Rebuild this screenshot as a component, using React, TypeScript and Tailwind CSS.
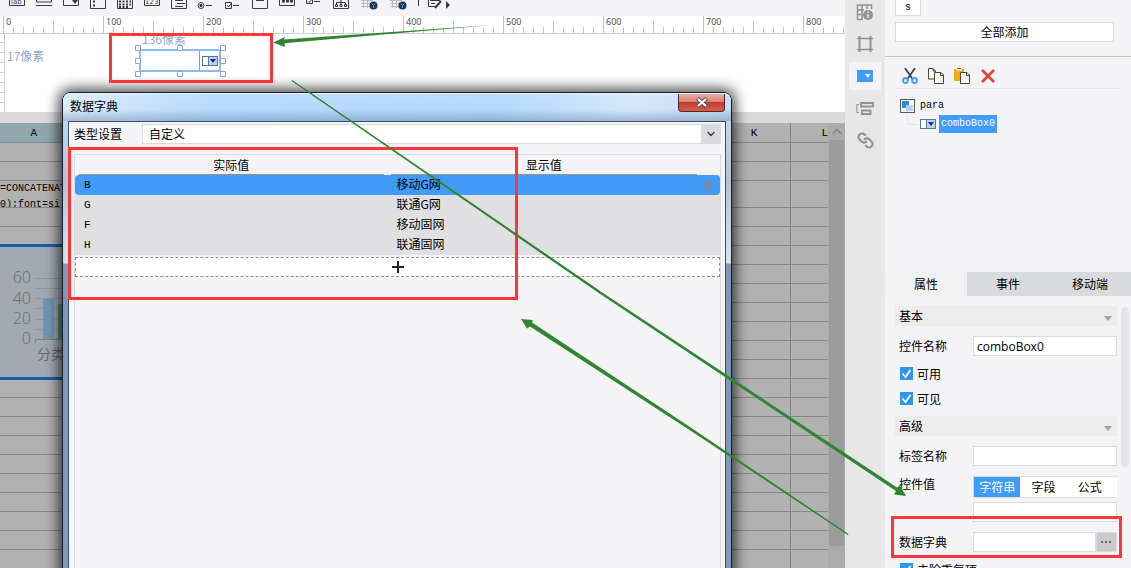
import { useState, type ReactNode } from 'react';
import { ChevronDown, ChevronUp } from 'lucide-react';

const ROWS = [
  { value: 'B', label: '移动G网' },
  { value: 'G', label: '联通G网' },
  { value: 'F', label: '移动固网' },
  { value: 'H', label: '联通固网' },
];

const RULER_MARKS = [0, 100, 200, 300, 400, 500, 600, 700, 800];

// the formula row is taller than the rest
const SHEET_ROWS = [
  { height: 'h-[19px]', text: '' },
  { height: 'h-[19px]', text: '' },
  { height: 'h-[27px]', text: 'formula' },
  ...Array.from({ length: 60 }, () => ({ height: 'h-[19px]', text: '' })),
];

function ComboIcon({ className }: { className?: string }) {
  return (
    <svg className={className} width="16" height="10" viewBox="0 0 16 10" aria-hidden="true">
      <rect x="0.5" y="0.5" width="15" height="9" fill="#fff" stroke="#5577a8" />
      <path d="M6.5 1H15v8H6.5z" fill="#b9d3f3" />
      <path d="M6.5 1v8" stroke="#5577a8" />
      <path d="M8 3h6l-3 4z" fill="#1b2f7c" />
    </svg>
  );
}

function Toolbar() {
  return (
    <div className="h-4 overflow-hidden bg-[#f4f4f7]">
      <svg width="460" height="16" fill="none" stroke="#3a3a3e" aria-hidden="true">
        <path d="M9.500 -2v7.500h15v-7.500M36.500 -2v4h15v-4M36 5.500h16M63.500 -2v7.500h15v-7.500M90.500 -2v10.500h15v-10.500M117.500 -2v10.500h15v-10.500M144.500 -2v7.500h15v-7.500M171.500 -2v10.500h15v-10.500" />
        <text x="11" y="4" fontSize="7" fill="#3a3a3e" stroke="none" className="font-['DejaVu_Sans']">lab</text>
        <text x="145" y="4" fontSize="7" fill="#3a3a3e" stroke="none" className="font-['DejaVu_Sans']">123</text>
        <path d="M72 0h6l-3 4z" fill="#3a3a3e" stroke="none" />
        <path d="M93 1.500h2M93 5.500h2" strokeWidth="2" />
        <path d="M119 1.500h12M119 4.500h12M119 7h9" strokeDasharray="2 1.500" strokeWidth="2" />
        <path d="M175 .5h8M177 3.500h8M175 6.500h8" />
        <circle cx="201" cy="5.500" r="3" />
        <circle cx="201" cy="5.500" r="1.200" fill="#3a3a3e" />
        <path d="M206 5.500h6M233 5.500h6" />
        <path d="M225.500 2.500h6v6h-6zM227 5l1.500 2 3-4" />
        <path d="M252.500 -2v10.500h15v-10.500M256 .5h8" />
        <path d="M279.500 -2v7.500h15v-7.500" />
        <path d="M282 1h11" strokeWidth="3" strokeDasharray="3 1" />
        <path d="M306.500 -2v5.500h6v-5.500M308 1.500l1 1 3-3M314 1.500h6" />
        <path d="M333.500 -2v10.500h15v-10.500M341 0v2.500M336.500 5v-2.500h9V5M341 2v3" />
        <path d="M335.500 4.500h2v2h-2zM340 4.500h2v2h-2zM344.500 4.500h2v2h-2z" />
        <g stroke="#b5bac0">
          <path d="M361 .5h12M361 3.500h11M361 6.500h9M363.500 0v8M367.500 0v8M390 .5h12M390 3.500h11M390 6.500h9M392.500 0v8M396.500 0v8" />
        </g>
        <circle cx="373.500" cy="5.500" r="4" fill="#1e3450" stroke="none" />
        <path d="M371.500 3.500l2 2 2-2M373.500 5.500v2.500" stroke="#4aa3e0" />
        <circle cx="402.500" cy="5.500" r="4" fill="#1e3450" stroke="none" />
        <path d="M400.500 3.500l2 2 2-2M402.500 5.500v2.500" stroke="#4aa3e0" />
        <path d="M418.500 0v6" />
        <path d="M428.500 -2v8.500h7M430 .5h10M431 3.500h4M441 -2v2" />
        <path d="M435 8l6-7" strokeWidth="2" />
        <path d="M446 1v8l4-4z" fill="#3a3a3e" stroke="none" />
      </svg>
    </div>
  );
}

function Ruler() {
  return (
    <div className="flex h-[18px] overflow-hidden border-b border-[#cfcfd3] bg-white pl-[3px]">
      {RULER_MARKS.map((mark) => (
        <div key={mark} className="relative w-[100px] shrink-0">
          <svg width="100" height="17" stroke="#c4c4c8" aria-hidden="true">
            <path d="M.5 0v17M50.500 5v12" />
            <path d="M10.500 11v6M20.500 11v6M30.500 11v6M40.500 11v6M60.500 11v6M70.500 11v6M80.500 11v6M90.500 11v6" />
          </svg>
          <span className="absolute left-[3px] top-0 font-['Open_Sans',sans-serif] text-[9px] leading-[12px] text-[#444]">
            {mark}
          </span>
        </div>
      ))}
    </div>
  );
}

function ParamCanvas() {
  return (
    <div className="relative h-[78px] overflow-hidden bg-white">
      <svg className="absolute left-0 top-0" width="5" height="78" stroke="#cfcfd3" aria-hidden="true">
        <path d="M4.500 0v78M0 8.500h4M0 18.500h4M0 28.500h4M0 38.500h4M0 48.500h4M0 58.500h4M0 68.500h4" />
      </svg>
      <span className="absolute left-[7px] top-[14px] text-xs leading-4 text-[#8da9c4]">17像素</span>
      <span className="absolute left-[142px] top-[-3px] text-xs leading-4 text-[#8da9c4]">136像素</span>
      <div className="absolute left-[139px] top-[15px] flex h-[23px] w-[82px] items-center justify-end border-2 border-[#87bdf7] bg-white">
        <span className="mr-[2px] h-[19px] w-px bg-[#999]" />
        <ComboIcon className="mr-px" />
      </div>
      <svg className="absolute left-[135px] top-[11px]" width="92" height="32" fill="#fff" stroke="#86a6c2" aria-hidden="true">
        <path d="M.5 .5h5v5h-5zM42.500 .5h5v5h-5zM85.500 .5h5v5h-5zM.5 13.500h5v5h-5zM85.500 13.500h5v5h-5zM.5 26.500h5v5h-5zM42.500 26.500h5v5h-5zM85.500 26.500h5v5h-5z" />
      </svg>
    </div>
  );
}

function ChartPreview() {
  return (
    <div className="absolute left-0 top-[121px] h-[136px] w-[300px] border-y-[3px] border-[#1f5bab] bg-[#a3a8b1]">
      <svg width="300" height="130" aria-hidden="true">
        <path d="M35 31.500h265M35 41.500h265M35 51.500h265M35 61.500h265M35 72.500h265M35 82.500h265" stroke="#90949b" />
        <path d="M35.500 92.500H300M35.500 92v4" stroke="#7c8086" fill="none" />
        <rect x="43" y="52" width="11" height="40" fill="#6f97b5" />
        <rect x="58" y="57" width="11" height="35" fill="#5c8d74" />
        <g className="font-['Open_Sans',sans-serif] font-light" fontSize="16" fill="#666a70" textAnchor="end">
          <text x="31" y="36">60</text>
          <text x="31" y="57">40</text>
          <text x="31" y="77">20</text>
          <text x="31" y="97">0</text>
        </g>
        <text x="37" y="112" fontSize="14" fill="#666a70">分类</text>
      </svg>
    </div>
  );
}

function Spreadsheet() {
  return (
    <div className="flex min-h-0 flex-1 overflow-hidden bg-[#b2b2b2]">
      <div className="relative min-w-0 flex-1 overflow-hidden">
        <table className="w-full table-fixed border-collapse font-['Liberation_Mono',monospace] text-[10px] text-black">
          <colgroup>
            <col className="w-[68px]" />
            <col />
            <col className="w-[72px]" />
            <col className="w-[38px]" />
          </colgroup>
          <thead>
            <tr className="h-[19px] border-b border-[#868686] text-[11px] leading-4">
              <th className="border-r border-[#868686] bg-[#90a6ad] p-0 pt-[2px] font-normal">A</th>
              <th className="border-r border-[#868686]" />
              <th className="border-r border-[#868686] p-0 pt-[2px] font-normal">K</th>
              <th className="p-0 pt-[2px] text-right font-normal">L</th>
            </tr>
          </thead>
          <tbody>
            {SHEET_ROWS.map((row, i) => (
              <tr key={i} className={`${row.height} border-b border-[#868686]`}>
                <td className="border-r border-[#868686] p-0">
                  {row.text && (
                    <div className="h-[26px] overflow-hidden whitespace-nowrap leading-4">
                      =CONCATENATE(
                      <br />
                      0);font=si
                    </div>
                  )}
                </td>
                <td className="border-r border-[#868686]" />
                <td className="border-r border-[#868686]" />
                <td />
              </tr>
            ))}
          </tbody>
        </table>
        <ChartPreview />
      </div>
      <div className="flex w-[17px] flex-col items-center bg-[#ababab]">
        <ChevronUp className="h-[17px] w-4 text-[#555]" strokeWidth={1.5} />
        <div className="mb-[22px] w-[15px] flex-1 bg-[#9c9c9c]" />
      </div>
    </div>
  );
}

function DictionaryDialog() {
  const [selected, setSelected] = useState('B');

  return (
    <section
      aria-label="数据字典"
      className="absolute -bottom-2 left-[62px] top-[92px] flex w-[670px] flex-col rounded-t-lg border border-[#15202c] bg-[linear-gradient(180deg,#c9def4_0px,#b4c3d6_90px,#d5e3f2_170px,#7b98b8_171px,#7f9cbb_100%)] px-[5px] shadow-[0_0_14px_3px_rgba(0,0,0,0.75)]"
    >
      {/* Title bar */}
      <header className="-mx-[5px] flex h-7 justify-between rounded-t-lg border-t border-white/80 bg-[linear-gradient(180deg,rgba(255,255,255,0.1),rgba(255,255,255,0)_55%,rgba(70,105,145,0.35)),linear-gradient(90deg,#dcebfa,#b7dafd_22%,#b3d8fd_65%,#d3e7fb_85%,#c6dcf2)] pl-[7px] pr-[6px]">
        <h2 className="pt-[4px] text-xs leading-4 text-black">数据字典</h2>
        <button
          type="button"
          aria-label="关闭"
          className="flex h-[18px] w-[47px] items-center justify-center rounded-b border border-t-0 border-[#59232a] bg-[linear-gradient(180deg,#e6b0aa,#d98076_45%,#c33c2c_50%,#d3614c)]"
        >
          <svg width="12" height="11" viewBox="0 0 12 11" aria-hidden="true">
            <path d="M1.500 1.500l9 8M10.500 1.500l-9 8" stroke="#4a5060" strokeWidth="4" />
            <path d="M2 2l8 7M10 2l-8 7" stroke="#fff" strokeWidth="2.200" />
          </svg>
        </button>
      </header>

      <div className="flex flex-1 flex-col border border-b-0 border-[#3e4f63] bg-[#f4f4f7] pl-[5px] pr-1 pt-[2px]">
        {/* Type */}
        <div className="flex h-5 items-center">
          <label htmlFor="dict-type" className="w-[68px] text-xs text-black">
            类型设置
          </label>
          <div className="relative h-5 flex-1">
            <select
              id="dict-type"
              className="block h-5 w-full appearance-none border border-[#d9dadd] bg-white pl-[6px] text-xs leading-[18px] text-black outline-none"
            >
              <option>自定义</option>
            </select>
            <span className="pointer-events-none absolute inset-y-0 right-0 flex w-5 items-center justify-center bg-[#d9dadd]">
              <ChevronDown className="h-3 w-3 text-[#333]" strokeWidth={2.5} />
            </span>
          </div>
        </div>

        {/* Values */}
        <div className="mt-[10px] flex-1 border border-b-0 border-[#d9dadd]">
          <table className="w-full table-fixed border-separate border-spacing-0 text-xs text-black">
            <colgroup>
              <col />
              <col />
              <col className="w-[20px]" />
            </colgroup>
            <thead>
              <tr className="h-5">
                <th className="p-0 px-1 font-normal">
                  <div className="h-5 border-b border-[#999090] leading-5">实际值</div>
                </th>
                <th className="p-0 px-[3px] font-normal">
                  <div className="h-5 border-b border-[#999090] leading-5">显示值</div>
                </th>
                <th className="p-0" />
              </tr>
            </thead>
            <tbody className="bg-[#e0e0e2]">
              {ROWS.map((row) => {
                const active = row.value === selected;
                return (
                  <tr key={row.value} className="h-5" onClick={() => setSelected(row.value)}>
                    <td
                      className={`p-0 pl-[9px] font-['Liberation_Mono',monospace] text-[11px] leading-4 ${active ? 'rounded-l bg-[#419bf9]' : ''}`}
                    >
                      {row.value}
                    </td>
                    <td className={`p-0 pb-[2px] pl-[9px] leading-[18px] ${active ? 'bg-[#419bf9]' : ''}`}>{row.label}</td>
                    <td className={`p-0 ${active ? 'rounded-r bg-[#419bf9]' : ''}`}>
                      {active && (
                        <button type="button" aria-label="删除" className="flex h-5 w-[14px] items-center justify-center">
                          <svg width="9" height="9" viewBox="0 0 9 9" aria-hidden="true">
                            <path d="M1 1l7 7M8 1l-7 7" stroke="#7d8791" strokeWidth="2.500" />
                          </svg>
                        </button>
                      )}
                    </td>
                  </tr>
                );
              })}
            </tbody>
          </table>
          <button
            type="button"
            aria-label="添加"
            className="mt-[2px] flex h-5 w-full items-center justify-center border border-dashed border-[#8e8e90] bg-white"
          >
            <svg width="12" height="12" stroke="#222" strokeWidth="2" aria-hidden="true">
              <path d="M6 0v12M0 6h12" />
            </svg>
          </button>
        </div>
      </div>
    </section>
  );
}

function SideButton({ label, active, children }: { label: string; active?: boolean; children: ReactNode }) {
  return (
    <button
      type="button"
      aria-label={label}
      className={`flex h-7 w-8 items-center justify-center text-[#919193] ${active ? 'bg-[#f4f4f7]' : ''}`}
    >
      {children}
    </button>
  );
}

function SideStrip() {
  return (
    <nav className="flex w-10 shrink-0 flex-col items-center gap-1 bg-[#e7e7e7]">
      <div className="-mt-[2px]">
        <SideButton label="单元格属性">
          <svg width="18" height="17" viewBox="0 0 18 17" fill="none" stroke="currentColor" strokeWidth="1.500">
            <path d="M7 15.500H1.500V1h14v4M1.500 6H8M1.500 10.500H6M6 1v14M11 1v4" />
            <circle cx="12" cy="11" r="5" fill="currentColor" stroke="none" />
            <path d="M12 10v4M12 7.500v1.500" stroke="#e7e7e7" />
          </svg>
        </SideButton>
      </div>
      <SideButton label="悬浮元素">
        <svg width="16" height="16" viewBox="0 0 16 16" fill="none" stroke="currentColor" strokeWidth="2">
          <path d="M2.500 0v16M13.500 0v16" />
          <path d="M0 2.500h16M0 13.500h16" strokeWidth="1.500" />
        </svg>
      </SideButton>
      <SideButton label="控件设置" active>
        <svg width="16" height="12" viewBox="0 0 16 12">
          <path d="M0 0h16v12H0z" fill="#419bf9" />
          <path d="M8 4h5.500l-2.700 4z" fill="#fff" />
        </svg>
      </SideButton>
      <SideButton label="条件属性">
        <svg width="18" height="13" viewBox="0 0 18 13" fill="none" stroke="currentColor" strokeWidth="1.800">
          <path d="M3 2.500H.8v8H3" strokeWidth="1" />
          <path d="M5 1h12v3.500H5zM6 8.500h8.500V12H6z" />
        </svg>
      </SideButton>
      <SideButton label="超级链接">
        <svg width="17" height="17" viewBox="0 0 24 24" fill="none" stroke="currentColor" strokeWidth="3">
          <g transform="matrix(-1 0 0 1 24 0)">
            <path d="M10 13a5 5 0 0 0 7.540.540l3-3a5 5 0 0 0-7.070-7.070l-1.720 1.710" />
            <path d="M14 11a5 5 0 0 0-7.540-.540l-3 3a5 5 0 0 0 7.070 7.070l1.710-1.710" />
          </g>
        </svg>
      </SideButton>
    </nav>
  );
}

function WidgetTree() {
  return (
    <div className="px-[10px]">
      <div className="flex h-8 items-center gap-[10px] border-b border-[#e4e4e6] pl-[7px] pt-[6px]">
        <button type="button" aria-label="剪切">
          <svg width="16" height="16" viewBox="0 0 16 16" fill="none">
            <path d="M3 0l7.500 11M13 0L5.500 11" stroke="#3f4650" strokeWidth="1.800" />
            <circle cx="3.500" cy="12.500" r="2.500" stroke="#419bf9" strokeWidth="1.800" />
            <circle cx="12.500" cy="12.500" r="2.500" stroke="#419bf9" strokeWidth="1.800" />
          </svg>
        </button>
        <button type="button" aria-label="复制">
          <svg width="16" height="16" viewBox="0 0 16 16" fill="#fff5e0" stroke="#3f4650">
            <path d="M.5 .5H5L7.500 3v8h-7zM5 .5V3h2.500" />
            <path d="M6.500 4.500H13L15.500 7v8.500h-9zM12.500 4.500v3h3" />
          </svg>
        </button>
        <button type="button" aria-label="粘贴">
          <svg width="16" height="16" viewBox="0 0 16 16">
            <path d="M0 1h10v12H0z" fill="#f2aa13" />
            <path d="M2.500 0h5v2.500h-5z" fill="#fff" />
            <path d="M3 .5h4" stroke="#b3562a" />
            <path d="M6.500 4.500H13L15.500 7v8.500h-9zM12.500 4.500v3h3" fill="#fff5e0" stroke="#3f4650" />
          </svg>
        </button>
        <button type="button" aria-label="删除控件" className="pl-px">
          <svg width="14" height="14" viewBox="0 0 14 14">
            <path d="M1 1l12 12M13 1L1 13" stroke="#e8413b" strokeWidth="2.800" />
          </svg>
        </button>
      </div>
      <ul className="pl-[5px] pt-2 font-['Liberation_Mono',monospace] text-[10px] leading-[18px] text-black">
        <li className="flex items-center gap-[5px]">
          <svg width="15" height="14" viewBox="0 0 15 14">
            <rect x=".5" y=".5" width="14" height="13" fill="#fff" stroke="#55595f" />
            <path d="M2 2h7v7H2z" fill="#2f8dcb" />
            <path d="M6 6h7v6H6z" fill="#b7cdf5" />
          </svg>
          para
        </li>
        <li className="flex items-center">
          <svg width="20" height="18" fill="none" stroke="#e4e4e6">
            <path d="M7.500 0v9.500H17" />
          </svg>
          <ComboIcon className="mr-[3px]" />
          <span className="bg-[#419bf9] px-[2px] text-white">comboBox0</span>
        </li>
      </ul>
    </div>
  );
}

function SectionHead({ title }: { title: string }) {
  return (
    <button type="button" className="flex h-5 w-full items-center justify-between bg-[#ececec] px-1 text-xs text-black">
      {title}
      <svg className="mt-1" width="10" height="5" aria-hidden="true">
        <path d="M1 0h8L5 5z" fill="#a3a3a5" />
      </svg>
    </button>
  );
}

function CheckRow({ label }: { label: string }) {
  return (
    <label className="relative flex h-[15px] items-center gap-1 pl-[5px] text-xs leading-[15px] text-black">
      <input type="checkbox" defaultChecked className="peer h-[13px] w-[13px] appearance-none border border-[#2f96ee] checked:bg-[#2f96ee]" />
      <svg className="pointer-events-none absolute left-[5px] hidden peer-checked:block" width="13" height="13" fill="none" stroke="#fff" strokeWidth="1.800">
        <path d="M2.500 6.500l3 3.500 5-7" />
      </svg>
      {label}
    </label>
  );
}

const FIELD = 'h-5 min-w-0 flex-1 border border-[#d9dadd] bg-white px-[3px] text-xs leading-4 text-black outline-none';
const LABEL = 'w-[78px] shrink-0 pl-1 text-xs leading-5 text-black';

function PropertyPanel() {
  const [tab, setTab] = useState('属性');
  const [kind, setKind] = useState('字符串');

  return (
    <aside className="flex w-[246px] shrink-0 flex-col overflow-hidden bg-[#f4f4f7]">
      <div className="h-[57px] shrink-0 border-b border-[#c8c6b8] pl-[10px] pr-[17px]">
        <button type="button" className="block h-4 w-[26px] border border-t-0 border-[#d9dadd] bg-white font-['Liberation_Mono',monospace] text-[10px] leading-3 text-black">
          s
        </button>
        <button type="button" className="mt-[6px] block h-5 w-full border border-[#d9dadd] bg-white text-xs leading-4 text-black">
          全部添加
        </button>
      </div>
      <div className="h-[215px] shrink-0">
        <WidgetTree />
      </div>

      <div className="grid h-6 shrink-0 grid-cols-3">
        {['属性', '事件', '移动端'].map((name) => (
          <button
            key={name}
            type="button"
            onClick={() => setTab(name)}
            className={`text-xs text-black ${tab === name ? 'bg-[#f1f1f2]' : 'bg-[#d8dade]'}`}
          >
            {name}
          </button>
        ))}
      </div>

      <div className="flex shrink-0 pt-[10px]">
        <div className="flex min-w-0 flex-1 flex-col pl-[10px] pr-1">
          <SectionHead title="基本" />
          <div className="mt-[10px] flex">
            <label htmlFor="widget-name" className={LABEL}>控件名称</label>
            <input id="widget-name" defaultValue="comboBox0" className={`${FIELD} font-['Open_Sans',sans-serif]`} />
          </div>
          <div className="mt-[10px] flex flex-col gap-[10px]">
            <CheckRow label="可用" />
            <CheckRow label="可见" />
          </div>
          <div className="mt-[10px]">
            <SectionHead title="高级" />
          </div>
          <div className="mt-[10px] flex">
            <label htmlFor="tag-name" className={LABEL}>标签名称</label>
            <input id="tag-name" className={FIELD} />
          </div>
          <div className="mt-[10px] flex items-start">
            <label htmlFor="widget-value" className={`${LABEL} -mt-[2px]`}>控件值</label>
            <div className="min-w-0 flex-1">
              <div className="grid h-[22px] grid-cols-3 border border-r-0 border-[#d9dadd] bg-white pr-1">
                {['字符串', '字段', '公式'].map((name) => (
                  <button
                    key={name}
                    type="button"
                    onClick={() => setKind(name)}
                    className={`text-xs leading-4 ${kind === name ? 'bg-[#419bf9] text-white' : 'text-black'}`}
                  >
                    {name}
                  </button>
                ))}
              </div>
              <div className="mt-1 flex">
                <input id="widget-value" className={FIELD} />
              </div>
            </div>
          </div>
          <div className="mt-[10px] flex">
            <label htmlFor="dictionary" className={LABEL}>数据字典</label>
            <input id="dictionary" className={FIELD} />
            <button type="button" aria-label="编辑数据字典" className="flex h-5 w-[21px] items-center justify-center border border-[#d9dadd] bg-[#c8cacd]">
              <svg width="11" height="2" fill="#66696d"><path d="M0 0h2v2H0zM4 0h2v2H4zM8 0h2v2H8z" /></svg>
            </button>
          </div>
          <div className="mt-[10px]">
            <CheckRow label="去除重复项" />
          </div>
        </div>
        <div className="mr-[2px] mt-px h-40 w-2 rounded bg-[#e5e5e7]" />
      </div>
    </aside>
  );
}

// red frames and green arrows drawn over the designer
function Annotations() {
  return (
    <svg className="pointer-events-none absolute left-0 top-0" width="1131" height="568" aria-hidden="true">
      <g fill="none" stroke="#ff3535" strokeWidth="3">
        <rect x="110.500" y="34.500" width="161" height="47" />
        <rect x="69.500" y="148.500" width="447" height="150" />
        <rect x="892.500" y="517.500" width="228" height="39" />
      </g>
      <g fill="#2f862f">
        <path d="M492 25L284 39.500L285 37L273 42.500L285 47L284.500 43.300L400 33Z" />
        <path d="M292 80L600 291L897 487.500L900 485.500L906 496L894 494.500L896 491L598 292.500L291.500 81Z" />
        <path d="M848.500 534L690 427L532 322.500L533 320L521 319L527 328.500L530 326.500L688 429L848 535Z" />
      </g>
      <path d="M292 80.500L600 291.500M848 534.500L689 428" stroke="#2f862f" strokeWidth="0.800" />
    </svg>
  );
}

export default function App() {
  return (
    <div className="relative flex h-screen overflow-hidden bg-[#f4f4f7] font-['Noto_Sans_CJK_SC',sans-serif]">
      <main className="relative flex min-w-0 flex-1 flex-col overflow-hidden">
        <Toolbar />
        <Ruler />
        <ParamCanvas />
        <div className="h-[11px] shrink-0 bg-[#dadadc]" />
        <Spreadsheet />
        <DictionaryDialog />
      </main>
      <SideStrip />
      <PropertyPanel />
      <Annotations />
    </div>
  );
}
